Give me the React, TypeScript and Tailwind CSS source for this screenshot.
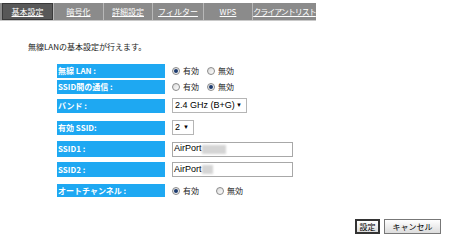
import React from 'react';

const tabs = [
  { label: '基本設定', w: 'w-[51px]', active: true },
  { label: '暗号化', w: 'w-[50px]' },
  { label: '詳細設定', w: 'w-[49px]' },
  { label: 'フィルター', w: 'w-[51px]' },
  { label: 'WPS', w: 'w-[49px]' },
  { label: 'クライアントリスト', w: 'w-[64px]', tight: true },
];

const jp = { fontFamily: '"MS PGothic", "Noto Sans CJK JP", sans-serif' };
const arial = { fontFamily: '"Liberation Sans", Arial, sans-serif' };

const Radio = ({ checked }: { checked?: boolean }) => (
  <span className="inline-flex w-[8px] h-[8px] rounded-full border border-[#8a8a8a] bg-gradient-to-br from-[#d9d9d9] to-white items-center justify-center">
    {checked && <span className="w-[4px] h-[4px] rounded-full bg-[#1c3a6e]" />}
  </span>
);

const RadioPair = ({ on, gap }: { on: boolean; gap: string }) => (
  <div className="flex items-center text-[8px] text-[#222]" style={jp}>
    <Radio checked={on} />
    <span className="ml-[3px]">有効</span>
    <span className={gap} />
    <Radio checked={!on} />
    <span className="ml-[3px]">無効</span>
  </div>
);

const Label = ({ text, h }: { text: string; h: string }) => (
  <div
    className={`w-[108px] ${h} bg-[#1ea8f2] text-white text-[8px] font-bold flex items-center pl-[1px] shrink-0`}
    style={jp}
  >
    {text}
  </div>
);

const Row = ({ label, h, mt, children }: { label: string; h: string; mt: string; children: React.ReactNode }) => (
  <div className={`flex items-center ${mt}`}>
    <Label text={label} h={h} />
    <div className="ml-[7px] flex items-center">{children}</div>
  </div>
);

const Select = ({ value, w }: { value: string; w: string }) => (
  <div className={`${w} h-[15px] border border-[#b5b5b5] bg-white flex items-center justify-between px-[2px]`} style={arial}>
    <span className="text-[9px] text-black">{value}</span>
    <span className="text-[6px] text-black mr-[2px]">▼</span>
  </div>
);

const TextBox = ({ blur }: { blur: string }) => (
  <div className="w-[121px] h-[15px] border border-[#a8a8a8] bg-white flex items-center pl-[1px]" style={arial}>
    <span className="text-[9px] text-black">AirPort</span>
    <span className={`${blur} h-[9px] bg-[#d4d4d4] blur-[1px]`} />
  </div>
);

export default function App() {
  return (
    <div className="w-[450px] h-[243px] bg-white overflow-hidden relative">
      <div className="pt-[3px]">
        <div className="w-[316px] h-[18px] bg-[#8b8b8b] flex pl-[2px] border-b border-[#c9c9c9]">
          {tabs.map((t, i) => (
            <div
              key={t.label}
              className={`${t.w} h-full flex items-center justify-center whitespace-nowrap text-[8px] text-white underline ${
                t.active ? 'bg-[#585858] border border-[#3a3a3a]' : ''
              } ${i > 0 ? 'border-l border-l-[#b8b8b8]' : ''} ${t.tight ? 'tracking-[-1px]' : ''}`}
              style={jp}
            >
              {t.label}
            </div>
          ))}
        </div>
      </div>

      <div className="ml-[28px] mt-[20px] text-[8px] text-[#222]" style={jp}>
        無線LANの基本設定が行えます。
      </div>

      <div className="ml-[57px] flex flex-col mt-[11px]">
        <Row label="無線 LAN :" h="h-[14px]" mt="mt-0">
          <RadioPair on gap="w-[8px]" />
        </Row>
        <Row label="SSID間の通信 :" h="h-[14px]" mt="mt-[2px]">
          <RadioPair on={false} gap="w-[8px]" />
        </Row>
        <Row label="バンド :" h="h-[14px]" mt="mt-[4px]">
          <Select value="2.4 GHz (B+G)" w="w-[75px]" />
        </Row>
        <Row label="有効 SSID:" h="h-[14px]" mt="mt-[7px]">
          <Select value="2" w="w-[22px]" />
        </Row>
        <Row label="SSID1 :" h="h-[16px]" mt="mt-[6px]">
          <TextBox blur="w-[24px]" />
        </Row>
        <Row label="SSID2 :" h="h-[15px]" mt="mt-[5px]">
          <TextBox blur="w-[11px]" />
        </Row>
        <Row label="オートチャンネル :" h="h-[13px]" mt="mt-[7px]">
          <RadioPair on gap="w-[17px]" />
        </Row>
      </div>

      <div className="flex justify-end mr-[9px] mt-[22px] gap-[4px]">
        <button
          className="h-[15px] w-[25px] border-2 border-[#333] bg-gradient-to-b from-white to-[#dcdcdc] text-[8px] text-black flex items-center justify-center"
          style={jp}
        >
          設定
        </button>
        <button
          className="h-[15px] w-[57px] border border-[#777] bg-gradient-to-b from-white to-[#dcdcdc] text-[8px] text-black flex items-center justify-center"
          style={jp}
        >
          キャンセル
        </button>
      </div>
    </div>
  );
}
